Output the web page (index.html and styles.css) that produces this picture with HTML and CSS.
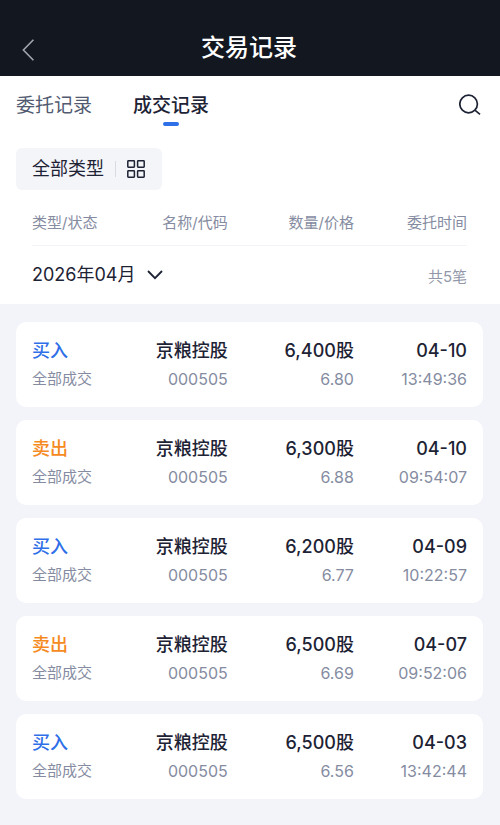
FILE: index.html
```html
<!DOCTYPE html>
<html lang="zh-CN">
<head>
    <meta charset="UTF-8">
    <meta name="viewport" content="width=device-width, initial-scale=1.0">
    <title>交易记录</title>
    <link rel="stylesheet" href="styles.css">
</head>
<body>

<!-- Title Bar -->
<header class="title-bar">
    <button class="icon-button back" type="button" aria-label="返回">
        <svg width="12" height="22" viewBox="0 0 12 22" fill="none" stroke="currentColor" stroke-width="1.6">
            <path d="M11.4 0.7 L1.4 11 L11.4 21.3"/>
        </svg>
    </button>
    <h1>交易记录</h1>
</header>

<!-- Tabs -->
<nav class="tabs">
    <a class="tab" href="#orders">委托记录</a>
    <a class="tab active" href="#deals" aria-current="page">成交记录</a>
    <button class="icon-button search" type="button" aria-label="搜索">
        <svg width="22" height="22" viewBox="0 0 22 22" fill="none" stroke="currentColor" stroke-width="1.7">
            <circle cx="9.6" cy="10" r="8.8"/>
            <path d="M15.9 16.1 L21 20.4"/>
        </svg>
    </button>
</nav>

<!-- Type Filter -->
<div class="filter">
    <button class="filter-button" type="button">
        <span>全部类型</span>
        <span class="divider"></span>
        <svg width="18" height="18" viewBox="0 0 18 18" fill="none" stroke="currentColor" stroke-width="1.5">
            <rect x="0.8" y="0.8" width="6.6" height="6.4" rx="0.6"/>
            <rect x="10.6" y="0.8" width="6.6" height="6.4" rx="0.6"/>
            <rect x="0.8" y="10.8" width="6.6" height="6.4" rx="0.6"/>
            <rect x="10.6" y="10.8" width="6.6" height="6.4" rx="0.6"/>
        </svg>
    </button>
</div>

<!-- Records -->
<table class="records">
    <thead>
        <tr class="row labels">
            <th scope="col">类型/状态</th>
            <th scope="col">名称/代码</th>
            <th scope="col">数量/价格</th>
            <th scope="col">委托时间</th>
        </tr>
        <tr class="month-row">
            <td colspan="3">
                <label class="month">
                    <select aria-label="月份">
                        <option>2026年04月</option>
                    </select>
                    <svg width="16" height="10" viewBox="0 0 16 10" fill="none" stroke="currentColor" stroke-width="1.8">
                        <path d="M1 1 L8 8.2 L15 1"/>
                    </svg>
                </label>
            </td>
            <td class="count">共5笔</td>
        </tr>
    </thead>
    <tbody>
        <tr class="row card">
            <td><strong class="buy">买入</strong><span>全部成交</span></td>
            <td><strong>京粮控股</strong><span class="number">000505</span></td>
            <td><strong>6,400股</strong><span class="number">6.80</span></td>
            <td><strong>04-10</strong><span class="number">13:49:36</span></td>
        </tr>
        <tr class="row card">
            <td><strong class="sell">卖出</strong><span>全部成交</span></td>
            <td><strong>京粮控股</strong><span class="number">000505</span></td>
            <td><strong>6,300股</strong><span class="number">6.88</span></td>
            <td><strong>04-10</strong><span class="number">09:54:07</span></td>
        </tr>
        <tr class="row card">
            <td><strong class="buy">买入</strong><span>全部成交</span></td>
            <td><strong>京粮控股</strong><span class="number">000505</span></td>
            <td><strong>6,200股</strong><span class="number">6.77</span></td>
            <td><strong>04-09</strong><span class="number">10:22:57</span></td>
        </tr>
        <tr class="row card">
            <td><strong class="sell">卖出</strong><span>全部成交</span></td>
            <td><strong>京粮控股</strong><span class="number">000505</span></td>
            <td><strong>6,500股</strong><span class="number">6.69</span></td>
            <td><strong>04-07</strong><span class="number">09:52:06</span></td>
        </tr>
        <tr class="row card">
            <td><strong class="buy">买入</strong><span>全部成交</span></td>
            <td><strong>京粮控股</strong><span class="number">000505</span></td>
            <td><strong>6,500股</strong><span class="number">6.56</span></td>
            <td><strong>04-03</strong><span class="number">13:42:44</span></td>
        </tr>
    </tbody>
</table>

</body>
</html>
```
FILE: styles.css
```css
/* General Styling */
* {
    box-sizing: border-box;
}
body {
    margin: 0;
    min-height: 100vh;
    font-family: Inter, "Noto Sans CJK SC", sans-serif;
    color: #1d2334;
    background-color: #f3f4f9;
}
button, select {
    padding: 0;
    border: none;
    background: none;
    font: inherit;
    color: inherit;
    cursor: pointer;
}
svg {
    display: block;
}

/* Title Bar */
.title-bar {
    display: grid;
    grid-template-columns: 1fr auto 1fr;
    align-items: center;
    padding: 28px 24px 8px 22px;
    background-color: #131720;
    color: #fff;
}
.title-bar h1 {
    margin: 0;
    font-size: 24px;
    line-height: 40px;
    font-weight: 500;
}
.back {
    justify-self: start;
    padding-top: 4px;
    color: #a3a6ad;
}

/* Tabs */
.tabs {
    display: flex;
    align-items: flex-start;
    gap: 41px;
    padding: 14px 19px 22px 16px;
    background-color: #fff;
}
.tab {
    font-size: 19px;
    line-height: 32px;
    color: #515a70;
    text-decoration: none;
}
.tab.active {
    color: #1d2334;
    font-weight: 500;
}
.tab.active::after {
    content: "";
    display: block;
    width: 16px;
    height: 4px;
    margin: 0 auto;
    border-radius: 2px;
    background-color: #2f6fe8;
}
.search {
    margin-left: auto;
    padding-top: 4px;
}

/* Type Filter */
.filter {
    padding: 0 16px;
    background-color: #fff;
}
.filter-button {
    display: flex;
    align-items: center;
    gap: 11px;
    padding: 0 17px 0 16px;
    border-radius: 6px;
    background-color: #f4f5f9;
    font-size: 18px;
    line-height: 42px;
}
.divider {
    width: 1px;
    height: 16px;
    background-color: #d9dbe3;
}

/* Records Table */
.records, .records thead, .records tbody {
    display: block;
}
.records th, .records td {
    padding: 0;
    font-weight: 400;
}
.row {
    display: grid;
    grid-template-columns: 16fr 29fr 29fr 26fr;
    text-align: right;
}
.row > :first-child {
    text-align: left;
}
.records thead {
    padding: 0 33px 0 32px;
    background-color: #fff;
}
.labels {
    padding: 21px 0 10px;
    border-bottom: 1px solid #f3f4f7;
    font-size: 15px;
    line-height: 24px;
    color: #858ca1;
}
.month-row {
    display: flex;
    align-items: center;
    justify-content: space-between;
    height: 58px;
}
.month {
    display: flex;
    align-items: center;
    gap: 12px;
}
.month select {
    appearance: none;
    field-sizing: content;
    font-size: 18px;
    line-height: 28px;
}
.count {
    font-size: 15px;
    color: #9298aa;
}

/* Record Cards */
.records tbody {
    display: flex;
    flex-direction: column;
    gap: 13px;
    padding: 18px 17px 24px 16px;
}
.card {
    padding: 15px 16px 14px;
    border-radius: 10px;
    background-color: #fff;
}
.card strong, .card span {
    display: block;
    white-space: nowrap;
}
.card strong {
    font-size: 18px;
    line-height: 28px;
    font-weight: 500;
}
.card span {
    font-size: 15px;
    line-height: 28px;
    color: #858ca1;
}
.card .number {
    font-size: 16px;
}
.card .buy { color: #2f6fe8; }
.card .sell { color: #f58a1f; }
```
